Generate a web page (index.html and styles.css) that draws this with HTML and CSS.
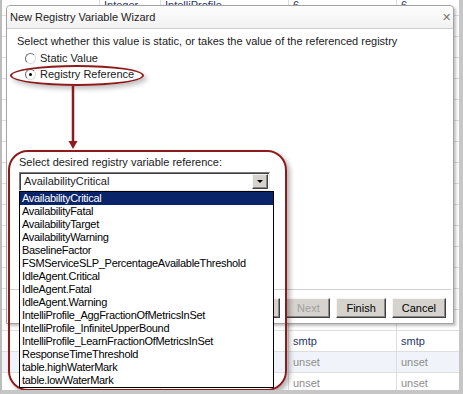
FILE: index.html
```html
<!DOCTYPE html>
<html lang="en">
<head>
    <meta charset="UTF-8">
    <meta name="viewport" content="width=device-width, initial-scale=1.0">
    <title>New Registry Variable Wizard</title>
<link rel="stylesheet" href="styles.css">
</head>
<body>
    <div class="screen">
        <!-- table behind the dialog -->
        <div class="grid">
            <div class="row"><div class="cell c1"></div><div class="cell c2">Integer</div><div class="cell c3">IntelliProfile</div><div class="cell c4">6</div><div class="cell c5">6</div></div>
            <div class="row"><div class="cell c1">r</div><div class="cell c2"></div><div class="cell c3"></div><div class="cell c4"></div><div class="cell c5"></div></div>
            <div class="row"><div class="cell c1"></div><div class="cell c2"></div><div class="cell c3"></div><div class="cell c4"></div><div class="cell c5"></div></div>
            <div class="row"><div class="cell c1">a</div><div class="cell c2"></div><div class="cell c3"></div><div class="cell c4"></div><div class="cell c5"></div></div>
            <div class="row"><div class="cell c1"></div><div class="cell c2"></div><div class="cell c3"></div><div class="cell c4"></div><div class="cell c5"></div></div>
            <div class="row"><div class="cell c1"></div><div class="cell c2"></div><div class="cell c3"></div><div class="cell c4"></div><div class="cell c5"></div></div>
            <div class="row"><div class="cell c1"></div><div class="cell c2"></div><div class="cell c3"></div><div class="cell c4"></div><div class="cell c5"></div></div>
            <div class="row"><div class="cell c1"></div><div class="cell c2"></div><div class="cell c3"></div><div class="cell c4"></div><div class="cell c5"></div></div>
            <div class="row"><div class="cell c1"></div><div class="cell c2"></div><div class="cell c3"></div><div class="cell c4"></div><div class="cell c5"></div></div>
            <div class="row"><div class="cell c1"></div><div class="cell c2"></div><div class="cell c3"></div><div class="cell c4"></div><div class="cell c5"></div></div>
            <div class="row"><div class="cell c1"></div><div class="cell c2"></div><div class="cell c3"></div><div class="cell c4"></div><div class="cell c5"></div></div>
            <div class="row"><div class="cell c1"></div><div class="cell c2"></div><div class="cell c3"></div><div class="cell c4"></div><div class="cell c5"></div></div>
            <div class="row"><div class="cell c1"></div><div class="cell c2"></div><div class="cell c3"></div><div class="cell c4"></div><div class="cell c5"></div></div>
            <div class="row"><div class="cell c1"></div><div class="cell c2"></div><div class="cell c3"></div><div class="cell c4"></div><div class="cell c5"></div></div>
            <div class="row"><div class="cell c1"></div><div class="cell c2"></div><div class="cell c3"></div><div class="cell c4"></div><div class="cell c5"></div></div>
            <div class="row"><div class="cell c1"></div><div class="cell c2"></div><div class="cell c3"></div><div class="cell c4"></div><div class="cell c5"></div></div>
            <div class="row"><div class="cell c1"></div><div class="cell c2"></div><div class="cell c3"></div><div class="cell c4 val">smtp</div><div class="cell c5 val">smtp</div></div>
            <div class="row alt"><div class="cell c1"></div><div class="cell c2"></div><div class="cell c3"></div><div class="cell c4 unset">unset</div><div class="cell c5 unset">unset</div></div>
            <div class="row"><div class="cell c1"></div><div class="cell c2"></div><div class="cell c3"></div><div class="cell c4 unset">unset</div><div class="cell c5 unset">unset</div></div>
        </div>

        <!-- wizard dialog -->
        <div class="dialog">
            <div class="dialog-title">
                <span>New Registry Variable Wizard</span>
                <span class="close">&#x2715;</span>
            </div>
            <div class="dialog-body">
                <p class="intro">Select whether this value is static, or takes the value of the referenced registry</p>
                <label class="radio-row"><span class="radio"></span>Static Value</label>
                <label class="radio-row"><span class="radio checked"></span>Registry Reference</label>
            </div>
            <div class="dialog-footer">
                <button class="btn">&lt; Back</button>
                <button class="btn" disabled>Next</button>
                <button class="btn">Finish</button>
                <button class="btn">Cancel</button>
            </div>
        </div>

        <!-- callout annotations -->
        <div class="ring"></div>
        <svg class="arrow" width="12" height="64" viewBox="0 0 12 64">
            <line x1="5" y1="0" x2="5" y2="57" stroke="#8e1b1b" stroke-width="2.5"/>
            <polygon points="0.5,55 9.5,55 5,63" fill="#8e1b1b"/>
        </svg>

        <div class="callout">
            <div class="callout-label">Select desired registry variable reference:</div>
            <div class="combo">
                <span class="combo-text">AvailabilityCritical</span>
                <span class="combo-btn"><span class="caret"></span></span>
            </div>
            <ul class="options">
                <li class="selected">AvailabilityCritical</li>
                <li>AvailabilityFatal</li>
                <li>AvailabilityTarget</li>
                <li>AvailabilityWarning</li>
                <li>BaselineFactor</li>
                <li>FSMServiceSLP_PercentageAvailableThreshold</li>
                <li>IdleAgent.Critical</li>
                <li>IdleAgent.Fatal</li>
                <li>IdleAgent.Warning</li>
                <li>IntelliProfile_AggFractionOfMetricsInSet</li>
                <li>IntelliProfile_InfiniteUpperBound</li>
                <li>IntelliProfile_LearnFractionOfMetricsInSet</li>
                <li>ResponseTimeThreshold</li>
                <li>table.highWaterMark</li>
                <li>table.lowWaterMark</li>
            </ul>
        </div>
    </div>
</body>
</html>
```

FILE: styles.css
```css
/* Global */
* {
    margin: 0;
    padding: 0;
    box-sizing: border-box;
}

body {
    font-family: "Liberation Sans", Arial, sans-serif;
    font-size: 11px;
    color: #1a1a1a;
    background: #fff;
}

.screen {
    position: relative;
    width: 463px;
    height: 394px;
    overflow: hidden;
    background: #fff;
    border-left: 2px solid #bcbcbc;
    border-right: 4px solid #c6c6c6;
    border-bottom: 4px solid #c6c6c6;
}

/* Background table */
.grid {
    margin-top: -5px;
}

.row {
    display: flex;
    height: 21px;
    border-bottom: 1px solid #dedede;
}

.row.alt {
    background: #f0f4fa;
}

.cell {
    height: 20px;
    line-height: 20px;
    padding-left: 4px;
    border-right: 1px solid #dedede;
    color: #1f3864;
    white-space: nowrap;
    overflow: hidden;
}

.c1 { width: 98px; }
.c2 { width: 61px; }
.c3 { width: 128px; }
.c4 { width: 108px; }
.c5 { flex: 1; border-right: none; }

.cell.unset {
    color: #8c8c8c;
}

/* Dialog */
.dialog {
    position: absolute;
    left: 4px;
    top: 5px;
    width: 448px;
    height: 319px;
    display: flex;
    flex-direction: column;
    background: #fff;
    border: 1px solid #a3a3a3;
    border-radius: 4px 4px 0 0;
    box-shadow: 2px 2px 3px rgba(0, 0, 0, 0.25);
}

.dialog-title {
    display: flex;
    align-items: center;
    justify-content: space-between;
    height: 23px;
    padding: 0 2px 0 3px;
    font-size: 11px;
    color: #222;
    background: linear-gradient(#fdfdfd, #f2f2f2);
    border-bottom: 1px solid #cfcfcf;
    border-radius: 4px 4px 0 0;
}

.close {
    font-size: 11px;
    color: #777;
}

.dialog-body {
    flex: 1;
    padding: 6px 10px;
}

.intro {
    line-height: 13px;
    margin-bottom: 2px;
}

.radio-row {
    display: flex;
    align-items: center;
    height: 16px;
    padding-left: 8px;
    gap: 4px;
}

.radio {
    position: relative;
    width: 11px;
    height: 11px;
    border-radius: 50%;
    border: 1px solid;
    border-color: #6e6e6e #dcdcdc #dcdcdc #6e6e6e;
    background: #fff;
}

.radio.checked::after {
    content: "";
    position: absolute;
    left: 3px;
    top: 3px;
    width: 3px;
    height: 3px;
    border-radius: 50%;
    background: #000;
}

.dialog-footer {
    display: flex;
    justify-content: flex-end;
    gap: 6px;
    height: 34px;
    padding: 8px 5px 0 0;
    margin: 0 2px;
    border-top: 1px solid #d0d0d0;
}

.btn {
    height: 20px;
    padding: 0 9px;
    min-width: 44px;
    font-family: inherit;
    font-size: 11px;
    color: #000;
    background: #d6d3ce;
    border: 1px solid;
    border-color: #f4f4f4 #404040 #404040 #f4f4f4;
    box-shadow: inset -1px -1px #888;
}

.btn[disabled] {
    color: #a0a0a0;
}

/* Callout annotations */
.ring {
    position: absolute;
    left: 8px;
    top: 65px;
    width: 134px;
    height: 21px;
    border: 2px solid #8e1b1b;
    border-radius: 50%;
    box-shadow: 3px 3px 5px rgba(0, 0, 0, 0.25);
}

.arrow {
    position: absolute;
    left: 66px;
    top: 86px;
}

.callout {
    position: absolute;
    left: 6px;
    top: 150px;
    width: 279px;
    height: 241px;
    padding: 4px 0 0 9px;
    border: 2px solid #8e1b1b;
    border-radius: 20px;
    box-shadow: 3px 3px 5px rgba(0, 0, 0, 0.3);
}

.callout-label {
    line-height: 13px;
    margin-bottom: 3px;
}

.combo {
    display: flex;
    align-items: center;
    justify-content: space-between;
    width: 251px;
    height: 19px;
    background: #fff;
    border: 1px solid;
    border-color: #7a7a7a #ececec #ececec #7a7a7a;
    box-shadow: inset 1px 1px #404040;
    padding: 1px 1px 1px 4px;
}

.combo-text {
    line-height: 13px;
}

.combo-btn {
    display: flex;
    align-items: center;
    justify-content: center;
    width: 16px;
    height: 15px;
    background: #d6d3ce;
    border: 1px solid;
    border-color: #f4f4f4 #404040 #404040 #f4f4f4;
    box-shadow: inset -1px -1px #888;
}

.caret {
    width: 0;
    height: 0;
    border-left: 3px solid transparent;
    border-right: 3px solid transparent;
    border-top: 3px solid #000;
}

.options {
    list-style: none;
    width: 255px;
    background: #fff;
    border: 1px solid #000;
}

.options li {
    height: 13px;
    line-height: 13px;
    padding-left: 2px;
    color: #000;
    letter-spacing: -0.3px;
    white-space: nowrap;
}

.options li.selected {
    background: #0a246a;
    color: #fff;
}
```
